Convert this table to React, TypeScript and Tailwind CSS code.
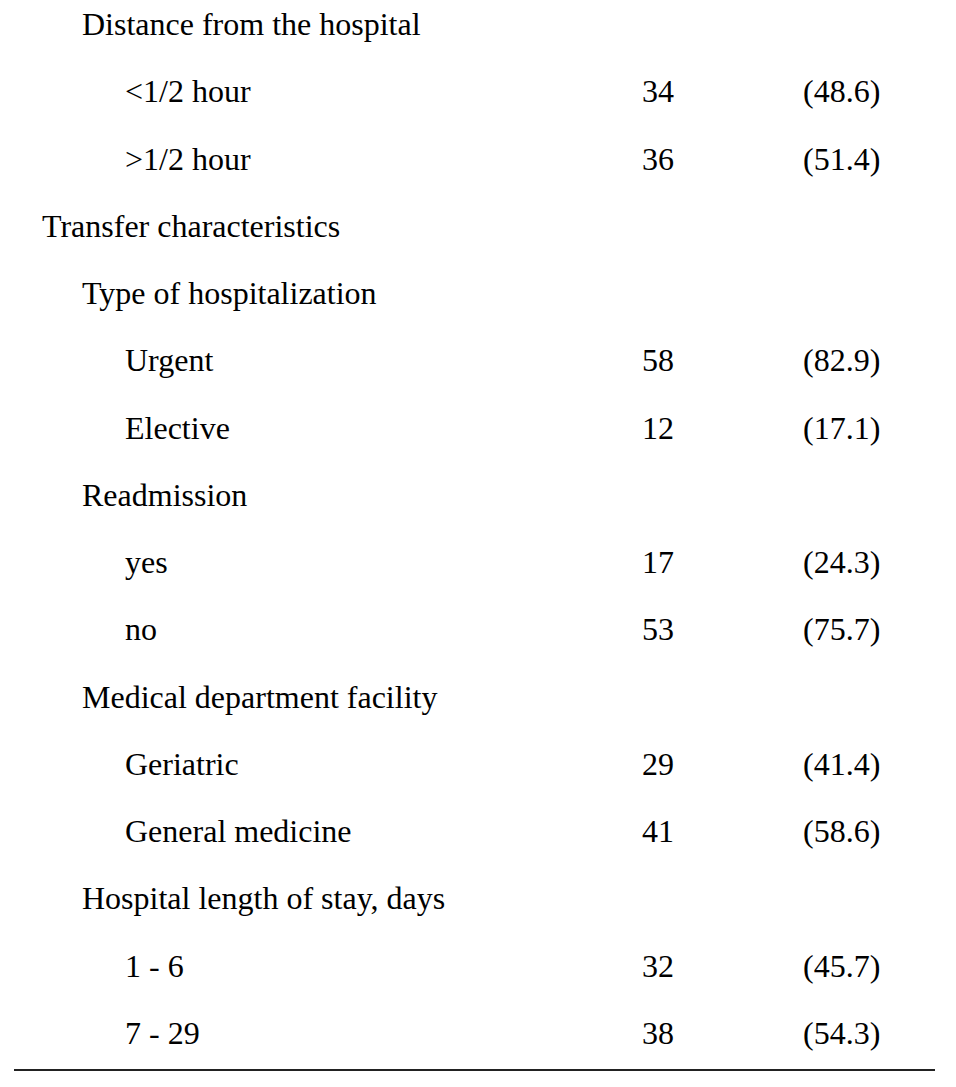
const rows: { label: string; level: 0 | 1 | 2; n?: string; pct?: string }[] = [
  { label: 'Distance from the hospital', level: 1 },
  { label: '<1/2 hour', level: 2, n: '34', pct: '(48.6)' },
  { label: '>1/2 hour', level: 2, n: '36', pct: '(51.4)' },
  { label: 'Transfer characteristics', level: 0 },
  { label: 'Type of hospitalization', level: 1 },
  { label: 'Urgent', level: 2, n: '58', pct: '(82.9)' },
  { label: 'Elective', level: 2, n: '12', pct: '(17.1)' },
  { label: 'Readmission', level: 1 },
  { label: 'yes', level: 2, n: '17', pct: '(24.3)' },
  { label: 'no', level: 2, n: '53', pct: '(75.7)' },
  { label: 'Medical department facility', level: 1 },
  { label: 'Geriatric', level: 2, n: '29', pct: '(41.4)' },
  { label: 'General medicine', level: 2, n: '41', pct: '(58.6)' },
  { label: 'Hospital length of stay, days', level: 1 },
  { label: '1 - 6', level: 2, n: '32', pct: '(45.7)' },
  { label: '7 - 29', level: 2, n: '38', pct: '(54.3)' },
]

const indent = ['pl-[42px]', 'pl-[82px]', 'pl-[125px]']

export default function App() {
  return (
    <div className="w-[956px] h-[1087px] bg-white overflow-hidden text-black text-[32px] leading-[67.25px] font-['Liberation_Serif','Times_New_Roman',serif]">
      <div className="-mt-[9px]">
        {rows.map((r, i) => (
          <div key={i} className="grid grid-cols-[642px_161px_1fr] whitespace-nowrap">
            <span className={indent[r.level]}>{r.label}</span>
            <span>{r.n}</span>
            <span>{r.pct}</span>
          </div>
        ))}
      </div>
      <div className="ml-[14px] w-[921px] mt-[2px] h-[2px] bg-[#222]" />
    </div>
  )
}
